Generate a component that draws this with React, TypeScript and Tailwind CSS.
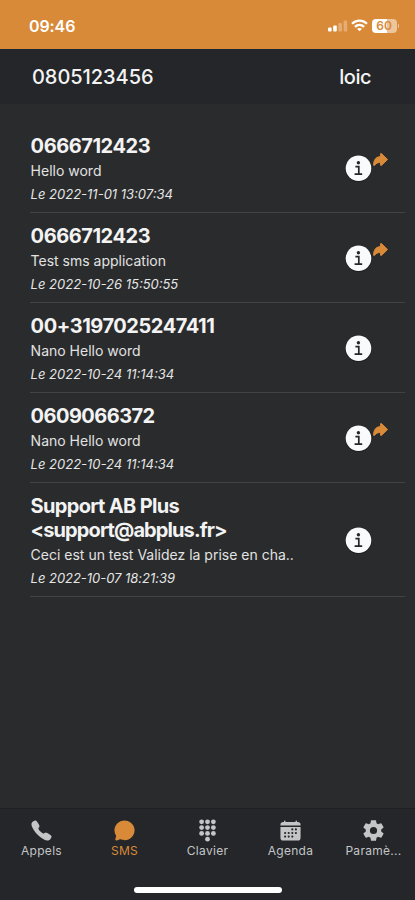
import React from "react";
import { IoArrowRedo, IoCalendar, IoCall, IoChatbubble, IoSettingsSharp } from "react-icons/io5";

type Message = { lines: { text: string; tracking: string }[]; text: string; date: string; dateClass: string; outgoing: boolean };

const messages: Message[] = [
  { lines: [{ text: "0666712423", tracking: "tracking-[-0.45px]" }], text: "Hello word", date: "Le 2022-11-01 13:07:34", dateClass: "", outgoing: true },
  { lines: [{ text: "0666712423", tracking: "tracking-[-0.45px]" }], text: "Test sms application", date: "Le 2022-10-26 15:50:55", dateClass: "", outgoing: true },
  { lines: [{ text: "00+3197025247411", tracking: "tracking-[-0.45px]" }], text: "Nano Hello word", date: "Le 2022-10-24 11:14:34", dateClass: "", outgoing: false },
  { lines: [{ text: "0609066372", tracking: "tracking-[-0.55px]" }], text: "Nano Hello word", date: "Le 2022-10-24 11:14:34", dateClass: "", outgoing: true },
  {
    lines: [
      { text: "Support AB Plus", tracking: "tracking-[-0.68px]" },
      { text: "<support@abplus.fr>", tracking: "tracking-[-0.9px]" },
    ],
    text: "Ceci est un test Validez la prise en cha..",
    date: "Le 2022-10-07 18:21:39",
    dateClass: "tracking-[-0.03px]",
    outgoing: false,
  },
];

const keypadDots = [
  [4, 2.6], [11, 2.6], [18, 2.6],
  [4, 8.4], [11, 8.4], [18, 8.4],
  [4, 14.2], [11, 14.2], [18, 14.2],
  [11, 20],
];

function KeypadIcon({ className }: { className?: string }) {
  return (
    <svg className={className} viewBox="0 0 23 23" fill="currentColor">
      {keypadDots.map(([x, y]) => (
        <circle key={`${x}-${y}`} cx={11.5 + (x - 11) * 0.84} cy={y + 0.2} r="2.4" />
      ))}
    </svg>
  );
}

const tabs = [
  { label: "Appels", Icon: IoCall },
  { label: "SMS", Icon: IoChatbubble },
  { label: "Clavier", Icon: KeypadIcon },
  { label: "Agenda", Icon: IoCalendar },
  { label: "Paramè...", Icon: IoSettingsSharp },
];

function StatusIcons() {
  return (
    <div className="flex items-center">
      <svg width="20" height="12" viewBox="0 0 20 12" fill="#fff">
        <rect x="0" y="7.5" width="3.6" height="4" rx="1" />
        <rect x="5.2" y="5.5" width="3.6" height="6" rx="1" />
        <rect x="10.4" y="3" width="3.6" height="8.5" rx="1" opacity=".3" />
        <rect x="15.6" y="0.5" width="3.6" height="11" rx="1" opacity=".3" />
      </svg>
      <svg className="ml-[3px]" width="17" height="13" viewBox="0 0 17 13" fill="none" stroke="#fff" strokeWidth="2.3">
        <path d="M1 4.8C5.3.6 11.7.6 16 4.8" />
        <path d="M3.9 7.8c2.7-2.5 6.5-2.5 9.2 0" />
        <path d="M8.5 12.3 6 9.8c1.5-1.2 3.5-1.2 5 0Z" fill="#fff" stroke="none" />
      </svg>
      <div className="ml-1 flex h-[14px] w-[25px] items-center justify-center rounded-[4px] bg-linear-to-r from-white from-60% to-[#ecc59d] to-60% text-[12px] font-semibold text-[#d98a38]">60</div>
      <div className="ml-px h-1 w-[1.5px] rounded-r bg-[#ecc59d]" />
    </div>
  );
}

function InfoIcon() {
  return (
    <svg width="27" height="27" viewBox="0 0 27 27">
      <circle cx="13.5" cy="13.5" r="13.4" fill="#1b1d1f" />
      <circle cx="13.5" cy="13.2" r="12.8" fill="#f9fafc" />
      <circle cx="13.4" cy="7.8" r="1.7" fill="#242628" />
      <path d="M10.4 11.7h3.4v7.2M9.6 19.1h7.6" fill="none" stroke="#242628" strokeWidth="1.7" />
    </svg>
  );
}

export default function App() {
  return (
    <div className="flex h-[900px] w-[415px] flex-col overflow-hidden bg-[#292b2c] font-['Inter',sans-serif] text-[#f3f3f3]">
      <div className="flex h-[49px] shrink-0 items-center justify-between bg-[#d98a38] pr-4 pl-[29px] pt-[2px]">
        <span className="text-[16px] font-semibold tracking-[-0.1px] text-white">09:46</span>
        <StatusIcons />
      </div>
      <header className="flex h-[55px] shrink-0 items-center justify-between border-t border-[#192631] bg-[#242629] pr-[44px] pl-[32px] text-[20px] font-medium">
        <span className="tracking-[-0.05px]">0805123456</span>
        <span className="tracking-[-0.5px]">loic</span>
      </header>
      <main className="flex-1 pt-[19px] pr-[10px] pl-[30px]">
        {messages.map((m, i) => (
          <div key={i} className="flex items-center justify-between border-b border-[#414344] pt-[11px] pb-[9px]">
            <div className="pl-[0.6px] whitespace-nowrap">
              <div className="text-[20px] leading-6 font-bold">
                {m.lines.map((l) => <div key={l.text} className={l.tracking}>{l.text}</div>)}
              </div>
              <div className="mt-[3px] text-[14px] leading-5 text-[#e2e2e2]">{m.text}</div>
              <div className={`mt-[3px] -mb-px text-[13px] leading-5 text-[#e6e6e6] italic ${m.dateClass}`}>{m.date}</div>
            </div>
            <div className="flex w-[60px] items-center">
              <InfoIcon />
              {m.outgoing && <IoArrowRedo className="mb-[19px] size-[17px] stroke-[#d98a38] stroke-[28px] text-[#d98a38]" />}
            </div>
          </div>
        ))}
      </main>
      <nav className="h-[92px] shrink-0 border-t border-[#1e2022] bg-[#242629]">
        <div className="grid h-[72px] grid-cols-5 pt-[10px]">
          {tabs.map(({ label, Icon }) => (
            <div key={label} className={`flex flex-col items-center ${label === "SMS" ? "text-[#d98a38]" : "text-[#c3c5c7]"}`}>
              <Icon className="size-[23px]" />
              <span className="mt-px text-[12px] leading-4 tracking-[0.3px]">{label}</span>
            </div>
          ))}
        </div>
        <div className="mx-auto mt-[6px] h-[6px] w-[148px] rounded-full bg-white" />
      </nav>
    </div>
  );
}
